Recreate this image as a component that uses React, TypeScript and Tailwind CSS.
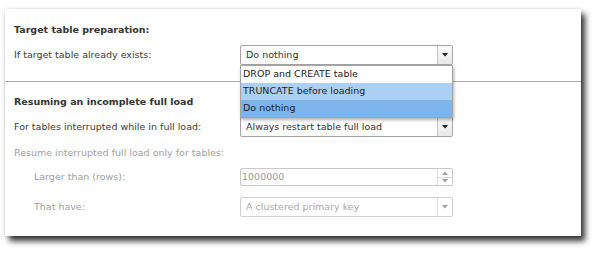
import React from "react";

const Arrow = ({ up, color = "#333" }: { up?: boolean; color?: string }) => (
  <svg width="6" height="4" viewBox="0 0 6 4" className="block">
    {up ? <path d="M0 4 L3 0.5 L6 4 Z" fill={color} /> : <path d="M0 0 L6 0 L3 3.5 Z" fill={color} />}
  </svg>
);

const Select = ({
  value,
  disabled,
  children,
}: {
  value: string;
  disabled?: boolean;
  children?: React.ReactNode;
}) => (
  <div
    className={`relative flex h-[20px] w-[213px] rounded-[2px] border bg-white ${
      disabled ? "h-[19px] border-[#d0d0d0]" : "border-[#a4a4a4]"
    }`}
  >
    <div
      className={`flex flex-1 items-center pl-[5px] ${disabled ? "text-[#a8a8a8]" : "text-[#333]"}`}
    >
      {value}
    </div>
    <div
      className={`flex w-[15px] items-center justify-center border-l ${
        disabled ? "border-[#dedede] bg-white" : "border-[#c4c4c4] bg-gradient-to-b from-[#fafafa] to-[#e8e8e8]"
      }`}
    >
      <Arrow color={disabled ? "#a0a0a0" : "#222"} />
    </div>
    {children}
  </div>
);

// open list under the first select
const Options = () => (
  <div className="absolute left-[-1px] top-[19px] z-10 w-[213px] border border-[#a4a4a4] bg-white text-[#222] shadow-[1px_2px_3px_rgba(0,0,0,0.3)]">
    <div className="flex h-[17px] items-center pl-[2px]">DROP and CREATE table</div>
    <div className="flex h-[17px] items-center bg-[#abd0f4] pl-[2px]">TRUNCATE before loading</div>
    <div className="flex h-[17px] items-center bg-[#7db5ea] pl-[2px]">Do nothing</div>
  </div>
);

const Row = ({
  label,
  indent,
  muted,
  children,
  className = "",
}: {
  label: string;
  indent?: boolean;
  muted?: boolean;
  children: React.ReactNode;
  className?: string;
}) => (
  <div className={`flex items-center ${className}`}>
    <div
      className={`w-[235px] ${indent ? "pl-[29px]" : "pl-[9px]"} ${muted ? "text-[#a0a0a0]" : "text-[#3c3c3c]"}`}
    >
      {label}
    </div>
    {children}
  </div>
);

export default function App() {
  return (
    <div className="h-[254px] w-[600px] bg-white pl-[5px] pt-[9px] font-['DejaVu_Sans',Verdana,sans-serif] text-[9.5px]">
      <div className="h-[227px] w-[576px] bg-white shadow-[4px_5px_6px_rgba(0,0,0,0.8),0_0_3px_rgba(0,0,0,0.15)]">
        {/* Target table preparation */}
        <div className="pt-[14px] pb-[16px]">
          <div className="h-[14px] pl-[9px] font-bold leading-[14px] text-[#333]">Target table preparation:</div>
          <Row label="If target table already exists:" className="mt-[8px]">
            <Select value="Do nothing">
              <Options />
            </Select>
          </Row>
        </div>

        <div className="border-t border-[#ababab]" />

        {/* Resuming an incomplete full load */}
        <div className="pt-[13px]">
          <div className="h-[14px] pl-[9px] font-bold leading-[14px] text-[#333]">Resuming an incomplete full load</div>
          <Row label="For tables interrupted while in full load:" className="mt-[8px]">
            <Select value="Always restart table full load" />
          </Row>
          <div className="mt-[9px] h-[14px] pl-[9px] leading-[14px] text-[#a0a0a0]">
            Resume interrupted full load only for tables:
          </div>
          <Row label="Larger than (rows):" indent muted className="mt-[8px]">
            <div className="flex h-[18px] w-[213px] rounded-[2px] border border-[#c8c8c8] bg-white">
              <div className="flex flex-1 items-center pl-[1px] text-[#9a9a9a]">1000000</div>
              <div className="flex w-[15px] flex-col border-l border-[#dadada]">
                <div className="flex flex-1 items-center justify-center border-b border-[#dadada]">
                  <Arrow up color="#a0a0a0" />
                </div>
                <div className="flex flex-1 items-center justify-center">
                  <Arrow color="#a0a0a0" />
                </div>
              </div>
            </div>
          </Row>
          <Row label="That have:" indent muted className="mt-[11px]">
            <Select value="A clustered primary key" disabled />
          </Row>
        </div>
      </div>
    </div>
  );
}
